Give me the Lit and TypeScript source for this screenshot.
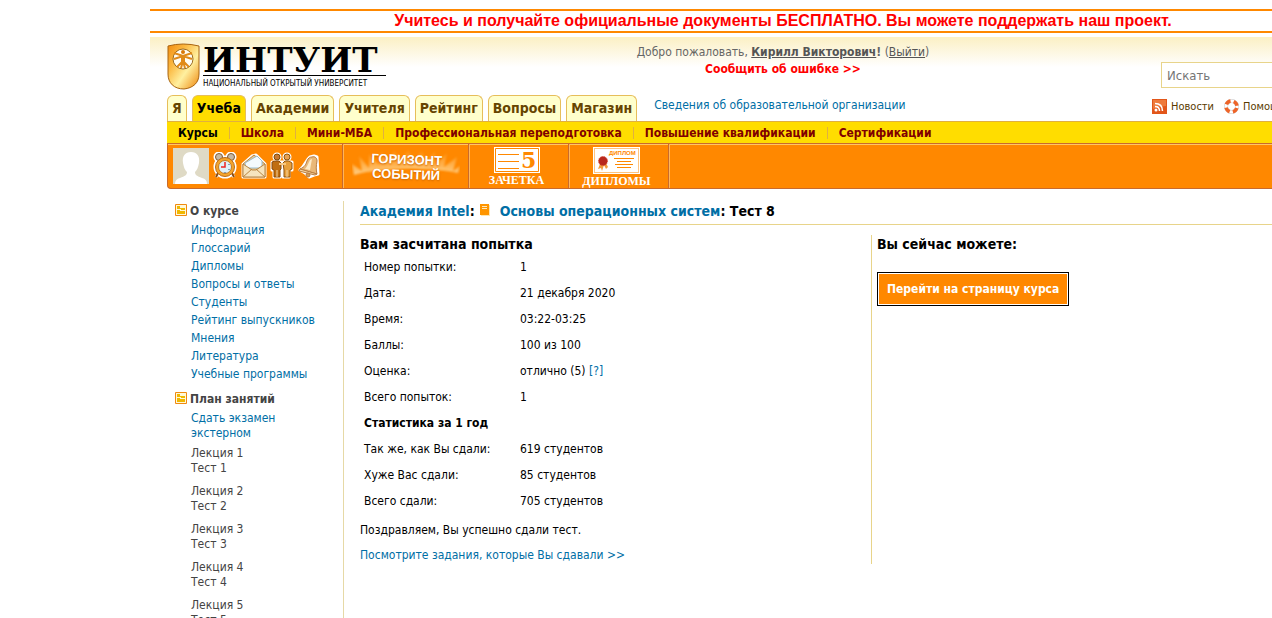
import { LitElement, html, css } from "lit";
import { customElement } from "lit/decorators.js";
import { classMap } from "lit/directives/class-map.js";

const tabs = ["Я", "Учеба", "Академии", "Учителя", "Рейтинг", "Вопросы", "Магазин"];
const sections = ["Курсы", "Школа", "Мини-МБА", "Профессиональная переподготовка", "Повышение квалификации", "Сертификации"];
const courseLinks = ["Информация", "Глоссарий", "Дипломы", "Вопросы и ответы", "Студенты", "Рейтинг выпускников", "Мнения", "Литература", "Учебные программы"];
const lessons = [1, 2, 3, 4, 5];
const attempt: [string, unknown][] = [
  ["Номер попытки:", "1"],
  ["Дата:", "21 декабря 2020"],
  ["Время:", "03:22-03:25"],
  ["Баллы:", "100 из 100"],
  ["Оценка:", html`отлично (5) <a href="#grade">[?]</a>`],
  ["Всего попыток:", "1"],
];
const stats: [string, string][] = [
  ["Так же, как Вы сдали:", "619 студентов"],
  ["Хуже Вас сдали:", "85 студентов"],
  ["Всего сдали:", "705 студентов"],
];

const shield = html`<svg width="34" height="48" viewBox="0 0 34 48" aria-hidden="true">
  <defs>
    <linearGradient id="gold" x1="0" y1="0" x2="1" y2="1">
      <stop offset="0" stop-color="#f28c10"></stop><stop offset=".3" stop-color="#fbb840"></stop>
      <stop offset=".6" stop-color="#fff0a0"></stop><stop offset="1" stop-color="#ee8408"></stop>
    </linearGradient>
  </defs>
  <path d="M1 3Q16 -1 32 3V31C32 40 26 45 17 46C7 46 1 40 1 31Z" fill="url(#gold)" stroke="#a86410"></path>
  <circle cx="16" cy="16" r="10" fill="#fffdf4" stroke="#9a6a20"></circle>
  <circle cx="16" cy="9" r="2" fill="#d87808"></circle>
  <path d="M7 10L16 13L25 10M7 16L16 13L25 16M16 18L10 24M16 18L22 24M16 18L14 25M16 18L18 25" fill="none" stroke="#e08a18" stroke-width="2"></path>
  <path d="M14 12H18L18 19H14Z" fill="#e08a18"></path>
</svg>`;

const avatar = html`<svg width="36" height="36" viewBox="0 0 36 36" aria-hidden="true">
  <path d="M0 0H36V36H0Z" fill="#dfdac5"></path>
  <path d="M18 4C24 4 27 8 26 15C25 20 24 22 22 24C22 27 24 28 29 30Q34 31 34 36H2Q2 31 7 30C12 28 14 27 14 24C12 22 11 20 10 15C9 8 12 4 18 4Z" fill="#fff"></path>
</svg>`;

const clock = html`<svg width="26" height="28" viewBox="0 0 26 28" aria-hidden="true">
  <g stroke="#fff" stroke-width="3" fill="#fff"><circle cx="7" cy="5" r="4"></circle><circle cx="19" cy="5" r="4"></circle><circle cx="13" cy="15" r="10"></circle><path d="M6 22L4 25M20 22L22 25"></path></g>
  <path d="M6 21L4 25M20 21L22 25" stroke="#8b4c12" stroke-width="2"></path>
  <circle cx="7" cy="5" r="3.500" fill="#c5b8a4" stroke="#7d5a38"></circle><circle cx="19" cy="5" r="3.500" fill="#c5b8a4" stroke="#7d5a38"></circle>
  <circle cx="13" cy="15" r="9.500" fill="#f5a52c" stroke="#b86a1a"></circle>
  <circle cx="13" cy="15" r="6.500" fill="#dff0f8" stroke="#c27a22"></circle>
  <path d="M13 10V15H9" stroke="#e22" stroke-width="1.500" fill="none"></path>
  <path d="M17 12v1M17 17v1M13 20v1" stroke="#357"></path>
</svg>`;

const envelope = html`<svg width="26" height="28" viewBox="0 0 26 28" aria-hidden="true">
  <path d="M2 12L11 4L15 3L24 12V25H2Z" fill="#fff" stroke="#fff" stroke-width="3" stroke-linejoin="round"></path>
  <path d="M2 12L13 3L24 12V25H2Z" fill="#e9c890" stroke="#b98543"></path>
  <path d="M4 11L16 4L21 9V16H5Z" fill="#f4fafd" stroke="#9bbccc"></path>
  <path d="M2 12L11 18H15L24 12V25H2Z" fill="#f6e4bd" stroke="#b98543"></path>
  <path d="M2 25L11 17M24 25L15 17" stroke="#b98543"></path>
</svg>`;

const people = html`<svg width="24" height="28" viewBox="0 0 24 28" aria-hidden="true">
  <g fill="#fff" stroke="#fff" stroke-width="3" stroke-linejoin="round"><circle cx="7" cy="5" r="3"></circle><circle cx="17" cy="5" r="3"></circle><path d="M2 10H22V18H19V25H13V20H10V25H4V18H2Z"></path></g>
  <path d="M2 10L5 9H9L11 11V17L10 18V25H4V18L2 17Z" fill="#c06e10" stroke="#8a4a0a"></path>
  <path d="M13 11L15 9H19L22 11V17L20 18V25H14V18Z" fill="#e8a03c" stroke="#8f520e"></path>
  <path d="M9 11H16V13H9Z" fill="#f8c880"></path>
  <circle cx="7" cy="5" r="3" fill="#c87830" stroke="#7b4a0a"></circle><circle cx="17" cy="5" r="3" fill="#e8a050" stroke="#8a5510"></circle>
  <path d="M7 18V25M17 18V25" stroke="#f6d6a0"></path>
</svg>`;

const bell = html`<svg width="24" height="28" viewBox="0 0 24 28" aria-hidden="true">
  <path d="M17 4L20 5L21 22L17 23L12 25L8 21L3 18C8 14 9 8 13 5Z" fill="#fff" stroke="#fff" stroke-width="3" stroke-linejoin="round"></path>
  <path d="M15 5C18 4 20 6 20 9C19 14 19 18 20 22L3 17C8 15 9 12 10 9C11 6 13 5 15 5Z" fill="#e9b878" stroke="#b87c40"></path>
  <path d="M13 8C11 12 10 15 8 17L13 18Q14 12 15 7Z" fill="#fdebc8"></path>
  <path d="M3 17L20 22L18 23L2 19Z" fill="#f8d8a0" stroke="#b87c40"></path>
  <circle cx="11" cy="23" r="2" fill="#d89848" stroke="#b87c40"></circle>
</svg>`;

const rays = html`<svg class="rays" width="108" height="32" viewBox="0 0 108 32" aria-hidden="true">
  <defs>
    <linearGradient id="ray" x1="0" y1="0" x2="0" y2="1"><stop offset="0" stop-color="#ffd890" stop-opacity="0"></stop><stop offset="1" stop-color="#ffe0a8" stop-opacity=".8"></stop></linearGradient>
    <filter id="soft"><feGaussianBlur stdDeviation="1"></feGaussianBlur></filter>
  </defs>
  <path d="M2 26L0 15L10 22L7 7L17 19L17 5L27 16L29 2L37 14L42 0L49 13L56 0L62 13L70 1L73 14L83 2L83 16L95 4L92 18L105 8L101 22L108 17L106 24Q54 11 2 26Z" fill="url(#ray)" filter="url(#soft)"></path>
  <path d="M8 24Q54 12 100 22Q54 15 8 24Z" fill="#ffdf9e" filter="url(#soft)"></path>
</svg>`;

const gradebook = html`<svg width="46" height="26" viewBox="0 0 46 26" aria-hidden="true">
  <path d="M0 0H46V26H0Z" fill="#fff"></path><path d="M1.500 1.500H44.500V24.500H1.500Z" fill="none" stroke="#f80"></path>
  <path d="M4 7.500H25M4 14.500H25M4 21.500H25" stroke="#f80"></path>
  <text class="mark" x="27" y="21">5</text>
</svg>`;

const diploma = html`<svg width="47" height="27" viewBox="0 0 47 27" aria-hidden="true">
  <path d="M0 0H47V27H0Z" fill="#fff"></path><path d="M1.500 1.500H45.500V25.500H1.500Z" fill="none" stroke="#f80" stroke-dasharray="1 1"></path>
  <text class="cap" x="16" y="8">ДИПЛОМ</text>
  <path d="M21 11.500H41M24 14.500H38M22 17.500H40M24 20.500H38" stroke="#f80"></path>
  <path d="M7 17L5 22L8 21L9 24L11 18L13 22L15 20L13 16Z" fill="#f29a3a"></path>
  <circle cx="10" cy="14" r="4.500" fill="#b8281c" stroke="#d84a30" stroke-dasharray="1 1"></circle>
</svg>`;

const rss = html`<svg width="15" height="15" viewBox="0 0 15 15" aria-hidden="true">
  <path d="M0 0H15V15H0Z" fill="#e2561a"></path><path d="M1 1H14V7Q7 7 1 10Z" fill="#ee7a3c"></path>
  <circle cx="4" cy="11" r="1.500" fill="#fff"></circle><path d="M3 7.500Q7.500 7.500 7.500 12M3 4.500Q10.500 4.500 10.500 12" fill="none" stroke="#fff" stroke-width="1.500"></path>
</svg>`;

const lifebuoy = html`<svg width="15" height="15" viewBox="0 0 15 15" aria-hidden="true">
  <circle cx="7.500" cy="7.500" r="5.500" fill="none" stroke="#c8c8cc" stroke-width="4"></circle>
  <circle cx="7.500" cy="7.500" r="5.500" fill="none" stroke="#fff" stroke-width="3"></circle>
  <circle cx="7.500" cy="7.500" r="5.500" fill="none" stroke="#ee6428" stroke-width="3.500" stroke-dasharray="5.320 3.320" stroke-dashoffset="-1.660"></circle>
</svg>`;

const folder = html`<svg width="12" height="12" viewBox="0 0 12 12" aria-hidden="true">
  <path d="M.5.5H11.500V11.500H.5Z" fill="#fff8d8" stroke="#f08a10"></path>
  <path d="M2 2H5V4H10V6H6V5H2ZM2 6H5V7H10V10H2Z" fill="#f0b800"></path>
</svg>`;

const book = html`<svg width="10" height="12" viewBox="0 0 10 12" aria-hidden="true">
  <path d="M1 1H10V12H1Z" fill="#ffe6b0"></path><path d="M0 0H9V11H0Z" fill="#ff9500"></path><path d="M2 2.500H7M2 4.500H7" stroke="#ffe9c0"></path>
</svg>`;

@customElement("app-root")
export class AppRoot extends LitElement {
  static styles = css`
    :host {
      display: block;
      height: 100vh;
      overflow: hidden;
      background: #fff;
      color: #000;
      font: 12px/18px "DejaVu Sans Condensed", "DejaVu Sans", sans-serif;
      font-stretch: condensed;
    }
    * { box-sizing: border-box; }
    a { color: #006ea5; text-decoration: none; }
    svg { display: block; flex: none; }
    h1, h2, p, ul { margin: 0; padding: 0; }
    ul { list-style: none; }
    .page { margin-left: 150px; padding-top: 9px; min-width: 1266px; }
    .banner {
      border: solid #f80; border-width: 2px 0; height: 24px; margin-bottom: 4px;
      font: bold 16px/19px "Liberation Sans", Arial, sans-serif; color: #f00; text-align: center;
    }
    .head { padding: 0 17px; background: linear-gradient(#fbf0c4, #fff) 0 0 / 100% 30px no-repeat; }
    .top { display: grid; grid-template-columns: 1fr auto 1fr; height: 58px; }
    .logo { display: flex; gap: 2px; padding-top: 6px; color: #000; }
    .name { display: block; width: 183px; height: 33px; border-bottom: 1px solid #000; font: bold 34px/34px "DejaVu Serif", serif; }
    .tagline { display: block; font: 8px/15px "DejaVu Sans Condensed", "DejaVu Sans", sans-serif; font-stretch: condensed; white-space: nowrap; }
    .welcome { text-align: center; color: #666; padding-top: 7px; line-height: 17px; }
    .welcome a { color: #555; text-decoration: underline; }
    .welcome .report { color: #f00; font-weight: bold; text-decoration: none; }
    .search { justify-self: end; width: 238px; padding-top: 25px; }
    .search input {
      width: 100%; height: 26px; border: 1px solid #e8d48a; padding: 0 5px; background: #fff;
      font: 13px "DejaVu Sans Condensed", "DejaVu Sans", sans-serif; font-stretch: condensed;
    }
    .search input::placeholder { color: #757575; opacity: 1; }
    .tabs { display: flex; align-items: flex-end; gap: 5px; height: 26px; }
    .tab {
      height: 26px; padding: 0 4px; border: 1px solid #e6be5a; border-bottom: 0; border-radius: 6px 6px 0 0;
      background: #ffc; color: #640; font-weight: bold; font-size: 14px; line-height: 25px;
    }
    .tab.on { background: #fd0; border-color: #e6be5a; color: #000; }
    .legal { padding-left: 12px; line-height: 32px; }
    .quick { display: flex; gap: 10px; margin-left: auto; width: 247px; padding-bottom: 7px; font-size: 11px; line-height: 15px; }
    .quick a { display: flex; gap: 4px; align-items: center; color: #5a3a00; }
    .bar { margin-left: 17px; display: flex; background: #fd0; border-top: 1px solid #e0b040; height: 22px; align-items: center; }
    .bar a { color: #800000; font-weight: bold; line-height: 12px; padding: 0 11px; border-left: 1px solid #e0b040; }
    .bar a:first-child { color: #000; border: 0; }
    .tools {
      margin-left: 17px; height: 46px; display: flex; background: #f80; border: 1px solid #c96a2c; border-right: 0;
      box-shadow: inset 0 1px #ffc766; border-radius: 0 0 0 4px; color: #fff;
    }
    .cell { display: flex; flex-direction: column; align-items: center; color: #fff; border-right: 1px solid #ffb55a; box-shadow: inset -1px 0 #c96a2c; }
    .me { width: 176px; flex-direction: row; gap: 3px; padding-left: 5px; }
    .horizon { width: 126px; position: relative; padding-top: 8px; font: bold 13px/15px "Liberation Sans", Arial, sans-serif; text-shadow: 0 1px 2px #c60; }
    .rays { position: absolute; top: 5px; left: 8px; }
    .tilt { position: relative; text-align: center; transform: rotate(2deg); }
    .shelf { width: 100px; padding: 3px 6px 0 0; font: bold 12px/15px "Liberation Serif", serif; }
    .mark { font: bold 22px "DejaVu Serif", serif; fill: #f80; }
    .cap { font: bold 6px "Liberation Sans", sans-serif; fill: #f80; }
    .body { display: grid; grid-template-columns: 177px 1fr; padding: 12px 17px 0; }
    .side { border-right: 1px solid #e6d9a6; padding: 0 8px; color: #444; }
    .group { display: flex; gap: 3px; align-items: center; font-weight: bold; line-height: 20px; }
    .group svg { margin-bottom: 2px; }
    .list { padding-left: 16px; margin-bottom: 6px; }
    .side a { display: block; }
    .plan { padding-left: 16px; line-height: 15px; padding-top: 2px; }
    .exam { width: 100px; margin-bottom: 5px; }
    .lesson { margin-bottom: 8px; }
    .side .lesson a { color: #444; }
    .main { padding-left: 16px; }
    .title { display: flex; align-items: center; font-size: 14px; line-height: 20px; height: 24px; padding-bottom: 4px; border-bottom: 1px solid #e8d48a; }
    .title svg { margin: 0 10px 2px 5px; }
    .title span { white-space: pre; }
    .cols { display: grid; grid-template-columns: 30fr 31fr; padding-top: 10px; }
    h2 { font-size: 14px; line-height: 18px; }
    .left { height: 329px; }
    .right { border-left: 1px solid #e8d48a; padding-left: 5px; }
    table { border-collapse: collapse; margin-top: 1px; }
    td, th { height: 26px; padding: 0 4px; text-align: left; font-weight: normal; }
    th { width: 156px; }
    .sub { font-weight: bold; }
    .done { padding-top: 7px; }
    .review { padding-top: 7px; }
    .go {
      margin-top: 19px; height: 34px; padding: 0 9px; border: 1px solid #000;
      box-shadow: inset 0 0 0 1px #fff; background: #f80; color: #fff; font: bold 12px "DejaVu Sans Condensed", "DejaVu Sans", sans-serif; font-stretch: condensed;
    }
  `;

  render() {
    return html`<div class="page">
      <div class="banner">Учитесь и получайте официальные документы БЕСПЛАТНО. Вы можете поддержать наш проект.</div>
      <header class="head">
        <div class="top">
          <a class="logo" href="#home">${shield}<span><span class="name">ИНТУИТ</span><span class="tagline">НАЦИОНАЛЬНЫЙ ОТКРЫТЫЙ УНИВЕРСИТЕТ</span></span></a>
          <div class="welcome">Добро пожаловать, <b><a href="#me">Кирилл Викторович</a>!</b> (<a href="#exit">Выйти</a>)<br><a class="report" href="#report">Сообщить об ошибке &gt;&gt;</a></div>
          <form class="search"><input type="search" aria-label="Искать" placeholder="Искать"></form>
        </div>
        <nav class="tabs">
          ${tabs.map((t) => html`<a class=${classMap({ tab: true, on: t === "Учеба" })} href="#tab">${t}</a>`)}
          <a class="legal" href="#legal">Сведения об образовательной организации</a>
          <div class="quick"><a href="#news">${rss}Новости</a><a href="#help">${lifebuoy}Помощь</a></div>
        </nav>
      </header>
      <nav class="bar">${sections.map((s) => html`<a href="#section">${s}</a>`)}</nav>
      <div class="tools">
        <div class="cell me">${avatar}${clock}${envelope}${people}${bell}</div>
        <a class="cell horizon" href="#horizon">${rays}<span class="tilt">ГОРИЗОНТ<br>СОБЫТИЙ</span></a>
        <a class="cell shelf" href="#marks">${gradebook}ЗАЧЕТКА</a>
        <a class="cell shelf" href="#diplomas">${diploma}ДИПЛОМЫ</a>
      </div>
      <div class="body">
        <aside class="side">
          <div class="group">${folder}О курсе</div>
          <ul class="list">${courseLinks.map((c) => html`<li><a href="#course">${c}</a></li>`)}</ul>
          <div class="group">${folder}План занятий</div>
          <div class="plan">
            <a class="exam" href="#exam">Сдать экзамен экстерном</a>
            ${lessons.map((n) => html`<div class="lesson"><a href="#lecture">Лекция ${n}</a><a href="#test">Тест ${n}</a></div>`)}
          </div>
        </aside>
        <main class="main">
          <h1 class="title"><a href="#intel">Академия Intel</a>:${book}<a href="#os">Основы операционных систем</a><span>: Тест 8</span></h1>
          <div class="cols">
            <section class="left">
              <h2>Вам засчитана попытка</h2>
              <table>
                ${attempt.map(([k, v]) => html`<tr><th scope="row">${k}</th><td>${v}</td></tr>`)}
                <tr><th class="sub" colspan="2">Статистика за 1 год</th></tr>
                ${stats.map(([k, v]) => html`<tr><th scope="row">${k}</th><td>${v}</td></tr>`)}
              </table>
              <p class="done">Поздравляем, Вы успешно сдали тест.</p>
              <p class="review"><a href="#review">Посмотрите задания, которые Вы сдавали &gt;&gt;</a></p>
            </section>
            <section class="right">
              <h2>Вы сейчас можете:</h2>
              <button class="go" type="button">Перейти на страницу курса</button>
            </section>
          </div>
        </main>
      </div>
    </div>`;
  }
}
